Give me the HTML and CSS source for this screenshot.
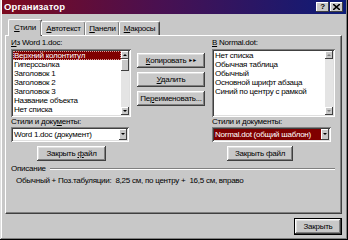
FILE: index.html
```html
<!DOCTYPE html>
<html lang="ru">
<head>
  <meta charset="UTF-8" />
  <title>Организатор</title>
  <link rel="stylesheet" href="styles.css">
</head>
<body>
  <div class="dialog">
    <div class="titlebar">
      <span class="title">Организатор</span>
      <div class="caption-btns">
        <span class="cbtn">?</span>
        <span class="cbtn">
          <svg width="7" height="6" viewBox="0 0 7 6"><path d="M0 0 L7 6 M7 0 L0 6" stroke="#000" stroke-width="1.6"/></svg>
        </span>
      </div>
    </div>

    <div class="tabs">
      <div class="tab active"><u>С</u>тили</div>
      <div class="tab"><u>А</u>втотекст</div>
      <div class="tab"><u>П</u>анели</div>
      <div class="tab"><u>М</u>акросы</div>
    </div>

    <div class="panel">
      <div class="cols">
        <div class="col left">
          <div class="lbl"><u>И</u>з Word 1.doc:</div>
          <div class="list">
            <div class="items">
              <div class="item selected">Верхний колонтитул</div>
              <div class="item">Гиперссылка</div>
              <div class="item">Заголовок 1</div>
              <div class="item">Заголовок 2</div>
              <div class="item">Заголовок 3</div>
              <div class="item">Название объекта</div>
              <div class="item">Нет списка</div>
            </div>
            <div class="vscroll">
              <span class="arrow up"></span>
              <span class="thumb"></span>
              <span class="track"></span>
              <span class="arrow down"></span>
            </div>
          </div>
          <div class="lbl">Стили и доку<u>м</u>енты:</div>
          <div class="combo">
            <span class="combo-text">Word 1.doc (документ)</span>
            <span class="drop"></span>
          </div>
          <button class="btn close-file">Закрыть <u>ф</u>айл</button>
        </div>

        <div class="mid">
          <button class="btn"><u>К</u>опировать <span class="arrows">&#9658;&#9658;</span></button>
          <button class="btn"><u>У</u>далить</button>
          <button class="btn">Пе<u>р</u>еименовать...</button>
        </div>

        <div class="col right">
          <div class="lbl"><u>В</u> Normal.dot:</div>
          <div class="list wide">
            <div class="items">
              <div class="item">Нет списка</div>
              <div class="item">Обычная таблица</div>
              <div class="item">Обычный</div>
              <div class="item">Основной шрифт абзаца</div>
              <div class="item">Синий по центру с рамкой</div>
            </div>
            <div class="vscroll disabled">
              <span class="arrow up"></span>
              <span class="track"></span>
              <span class="arrow down"></span>
            </div>
          </div>
          <div class="lbl">Стили и документы:</div>
          <div class="combo selected">
            <span class="combo-text">Normal.dot (общий шаблон)</span>
            <span class="drop"></span>
          </div>
          <button class="btn close-file">Закрыть файл</button>
        </div>
      </div>

      <div class="desc">
        <div class="desc-head"><span>Описание</span><span class="rule"></span></div>
        <div class="desc-text">Обычный + Поз.табуляции:&nbsp; 8,25 см, по центру +&nbsp; 16,5 см, вправо</div>
      </div>
    </div>

    <div class="footer">
      <button class="btn default">Закрыть</button>
    </div>
  </div>
</body>
</html>
```

FILE: styles.css
```css
body {
  margin: 0;
  background: #c8c8c8;
  font-family: 'Liberation Sans', Arial, sans-serif;
  font-size: 8px;
  letter-spacing: -0.25px;
  color: #000;
}
u {
  text-decoration: underline;
  text-underline-offset: 1px;
}
.dialog {
  width: 348px;
  height: 240px;
  box-sizing: border-box;
  padding: 0 3px 0 3px;
  background: #c8c8c8;
  box-shadow: inset -1px -1px #000, inset 1px 0 #dfdfdf, inset -2px -2px #808080, inset 2px 0 #fff;
  overflow: hidden;
}
.titlebar {
  height: 14px;
  margin: 0 -1px;
  display: flex;
  align-items: center;
  justify-content: space-between;
  padding: 0 3px 0 2px;
  background: linear-gradient(to right, #7c0a1e, #4a1050 45%, #0c1c78);
  color: #fff;
}
.title {
  font-weight: bold;
  font-size: 9.5px;
  letter-spacing: 0.1px;
  margin-top: -1px;
}
.caption-btns {
  display: flex;
  gap: 1px;
}
.cbtn {
  width: 13px;
  height: 10px;
  background: #c8c8c8;
  color: #000;
  font-weight: bold;
  font-size: 8px;
  line-height: 10px;
  display: flex;
  align-items: center;
  justify-content: center;
  box-shadow: inset -1px -1px #404040, inset 1px 1px #fff;
}
.tabs {
  display: flex;
  align-items: flex-end;
  margin: 5px 0 0 5px;
  height: 16px;
  position: relative;
  z-index: 1;
}
.tab {
  height: 14px;
  line-height: 13px;
  padding: 0;
  box-sizing: border-box;
  border-top: 1px solid #fff;
  border-left: 1px solid #fff;
  border-right: 1px solid #404040;
  border-radius: 2px 2px 0 0;
  box-shadow: inset -1px 0 #808080;
  margin-left: -1px;
  text-align: center;
  white-space: nowrap;
}
.tab:nth-child(2) { width: 45px; }
.tab:nth-child(3) { width: 35px; }
.tab:nth-child(4) { width: 41px; }
.tab.active {
  height: 17px;
  width: 34px;
  line-height: 15px;
  margin: 0 0 -1px 0;
  background: #c8c8c8;
}
.panel {
  width: 337px;
  height: 179px;
  box-sizing: border-box;
  margin-left: 2px;
  border-top: 1px solid #fff;
  border-left: 1px solid #fff;
  border-right: 1px solid #404040;
  border-bottom: 1px solid #404040;
  box-shadow: inset -1px -1px #808080;
  padding: 2px 0 0 5px;
}
.cols {
  display: flex;
}
.col.left { width: 120px; }
.col.right { width: 123px; }
.lbl {
  height: 9px;
  line-height: 9px;
  white-space: nowrap;
}
.list {
  margin-top: 2px;
  height: 68px;
  box-sizing: border-box;
  background: #fff;
  display: flex;
  padding: 2px;
  box-shadow: inset 1px 1px #808080, inset -1px -1px #fff, inset 2px 2px #404040, inset -2px -2px #dfdfdf;
}
.items {
  flex: 1;
}
.item {
  height: 9px;
  line-height: 9px;
  padding-left: 1px;
  white-space: nowrap;
}
.item.selected {
  background: #800000;
  color: #fff;
  outline: 1px dotted #d8a0a0;
  outline-offset: -1px;
}
.vscroll {
  width: 8px;
  display: flex;
  flex-direction: column;
  background: #e4e4e4;
}
.vscroll .arrow {
  height: 8px;
  background: #c8c8c8;
  box-shadow: inset -1px -1px #404040, inset 1px 1px #fff;
  position: relative;
}
.vscroll .arrow::after {
  content: "";
  position: absolute;
  left: 2px;
  border-left: 2px solid transparent;
  border-right: 2px solid transparent;
}
.vscroll .arrow.up::after {
  top: 3px;
  border-bottom: 2px solid #000;
}
.vscroll .arrow.down::after {
  top: 3px;
  border-top: 2px solid #000;
}
.vscroll.disabled .arrow.up::after { border-bottom-color: #808080; }
.vscroll.disabled .arrow.down::after { border-top-color: #808080; }
.vscroll .thumb {
  height: 12px;
  background: #c8c8c8;
  box-shadow: inset -1px -1px #404040, inset 1px 1px #fff;
}
.vscroll .track {
  flex: 1;
}
.combo {
  margin-top: 1px;
  width: 118px;
  height: 15px;
  box-sizing: border-box;
  background: #fff;
  padding: 2px;
  display: flex;
  align-items: stretch;
  box-shadow: inset 1px 1px #808080, inset -1px -1px #fff, inset 2px 2px #404040, inset -2px -2px #dfdfdf;
}
.combo-text {
  flex: 1;
  line-height: 11px;
  padding-left: 1px;
  white-space: nowrap;
  overflow: hidden;
}
.combo.selected .combo-text {
  background: #800000;
  color: #fff;
}
.col.right .combo { width: 119px; }
.drop {
  width: 8px;
  background: #c8c8c8;
  box-shadow: inset -1px -1px #404040, inset 1px 1px #fff;
  position: relative;
}
.drop::after {
  content: "";
  position: absolute;
  left: 2px;
  top: 4px;
  border-left: 2px solid transparent;
  border-right: 2px solid transparent;
  border-top: 2px solid #000;
}
.btn {
  font-family: inherit;
  font-size: 8px;
  letter-spacing: inherit;
  color: #000;
  background: #c8c8c8;
  border: none;
  padding: 0;
  height: 15px;
  box-shadow: inset -1px -1px #404040, inset 1px 1px #fff, inset -2px -2px #808080, inset 2px 2px #dfdfdf;
  white-space: nowrap;
}
.close-file {
  display: block;
  margin-top: 4px;
  width: 69px;
}
.col.left .close-file { margin-left: 26px; }
.col.right .close-file { margin-left: 15px; width: 66px; }
.mid {
  width: 68px;
  margin: 0 7px 0 6px;
  padding-top: 15px;
  display: flex;
  flex-direction: column;
  gap: 4px;
}
.arrows {
  font-size: 5px;
  letter-spacing: -1px;
  vertical-align: 1px;
}
.desc {
  margin-top: 3px;
  width: 324px;
}
.desc-head {
  display: flex;
  align-items: center;
  height: 9px;
  line-height: 9px;
}
.desc-head .rule {
  flex: 1;
  margin-left: 4px;
  border-top: 1px solid #808080;
  border-bottom: 1px solid #fff;
}
.desc-text {
  margin: 3px 0 0 5px;
  line-height: 9px;
  white-space: nowrap;
}
.footer {
  display: flex;
  justify-content: flex-end;
  padding: 4px 3px 0 0;
}
.btn.default {
  width: 48px;
  height: 17px;
  border: 1px solid #000;
  box-sizing: border-box;
}
```
